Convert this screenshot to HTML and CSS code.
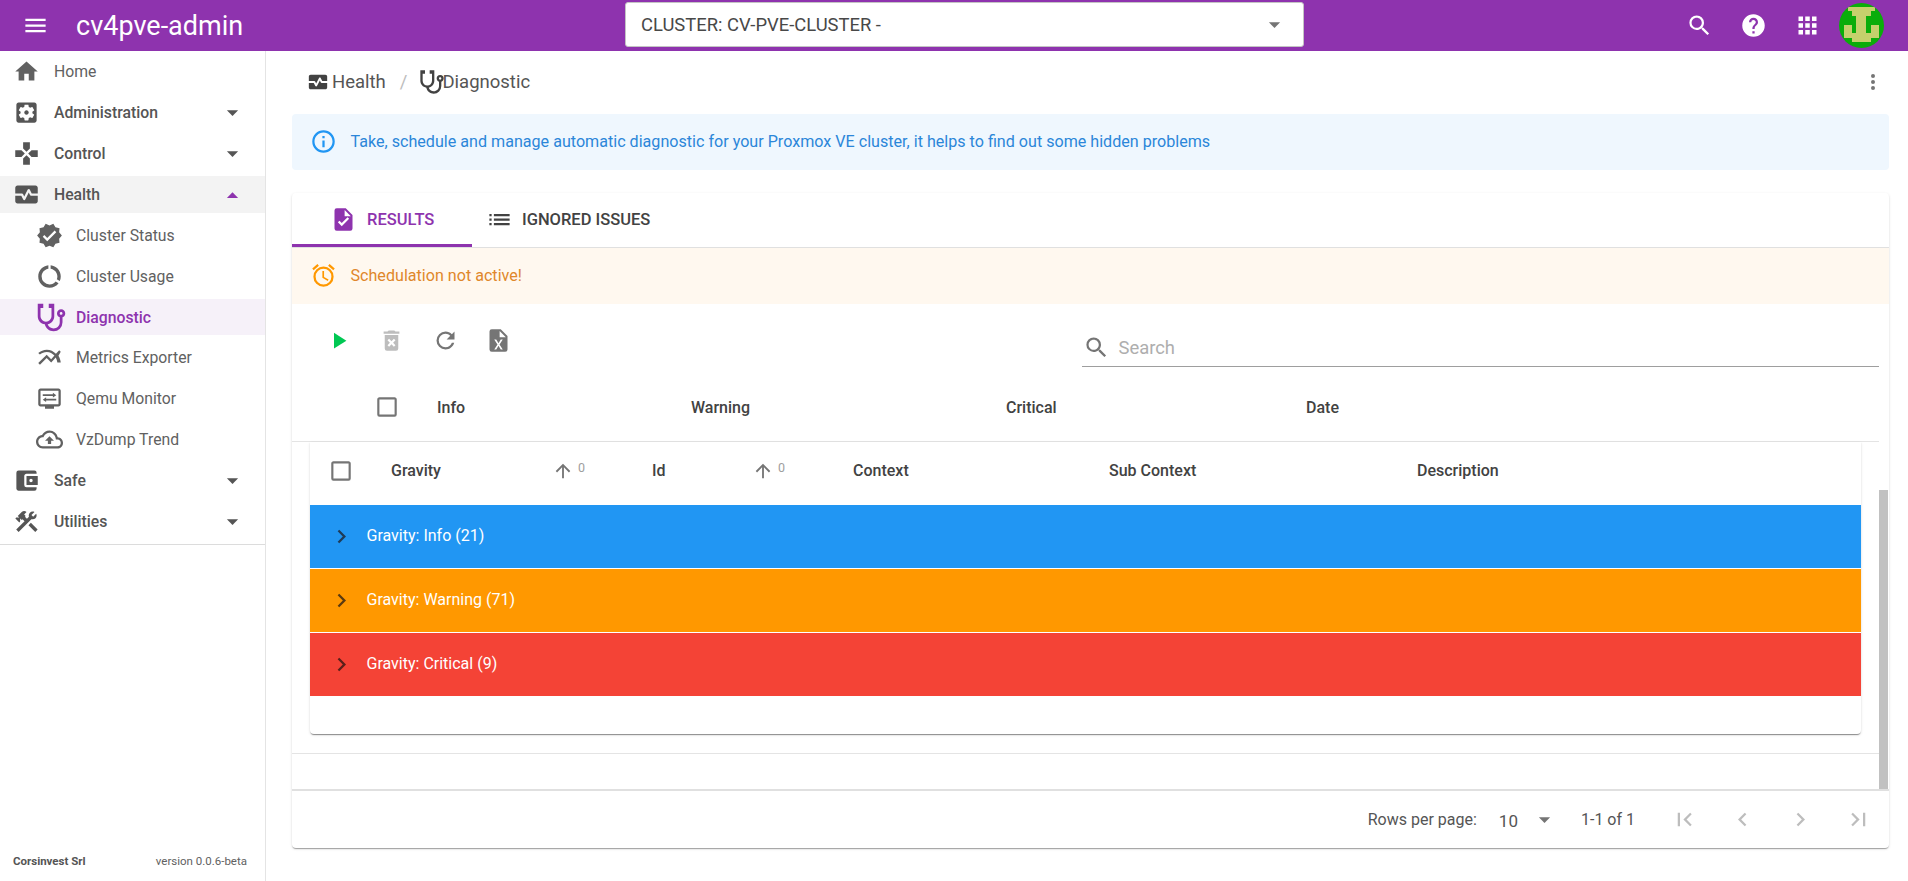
FILE: index.html
```html
<!DOCTYPE html>
<html>
  <head>
    <meta charset="UTF-8" />
    <title>cv4pve-admin</title>
    <link rel="stylesheet" href="styles.css">
  </head>
  <body>
    <svg class="sprite" xmlns="http://www.w3.org/2000/svg">
      <symbol id="i-menu" viewBox="0 0 24 24"><path d="M3,6H21V8H3V6M3,11H21V13H3V11M3,16H21V18H3V16Z"/></symbol>
      <symbol id="i-down" viewBox="0 0 24 24"><path d="M7,10L12,15L17,10H7Z"/></symbol>
      <symbol id="i-up" viewBox="0 0 24 24"><path d="M7,15L12,10L17,15H7Z"/></symbol>
      <symbol id="i-search" viewBox="0 0 24 24"><path d="M9.5,3A6.5,6.5 0 0,1 16,9.5C16,11.11 15.41,12.59 14.44,13.73L14.71,14H15.5L20.5,19L19,20.5L14,15.5V14.71L13.73,14.44C12.59,15.41 11.11,16 9.5,16A6.5,6.5 0 0,1 3,9.5A6.5,6.5 0 0,1 9.5,3M9.5,5C7,5 5,7 5,9.5C5,12 7,14 9.5,14C12,14 14,12 14,9.5C14,7 12,5 9.5,5Z"/></symbol>
      <symbol id="i-help" viewBox="0 0 24 24"><path d="M15.07,11.25L14.17,12.17C13.45,12.89 13,13.5 13,15H11V14.5C11,13.39 11.45,12.39 12.17,11.67L13.41,10.41C13.78,10.05 14,9.55 14,9C14,7.89 13.1,7 12,7A2,2 0 0,0 10,9H8A4,4 0 0,1 12,5A4,4 0 0,1 16,9C16,9.88 15.64,10.67 15.07,11.25M13,19H11V17H13M12,2A10,10 0 0,0 2,12A10,10 0 0,0 12,22A10,10 0 0,0 22,12C22,6.47 17.5,2 12,2Z"/></symbol>
      <symbol id="i-apps" viewBox="0 0 24 24"><path d="M16,20H20V16H16M16,14H20V10H16M10,8H14V4H10M16,8H20V4H16M10,14H14V10H10M4,14H8V10H4M4,20H8V16H4M10,20H14V16H10M4,8H8V4H4V8Z"/></symbol>
      <symbol id="i-home" viewBox="0 0 24 24"><path d="M10,20V14H14V20H19V12H22L12,3L2,12H5V20H10Z"/></symbol>
      <symbol id="i-admin" viewBox="0 0 24 24"><path d="M12 10c-1.1 0-2 .9-2 2s.9 2 2 2 2-.9 2-2-.9-2-2-2zm7-7H5c-1.11 0-2 .9-2 2v14c0 1.1.89 2 2 2h14c1.11 0 2-.9 2-2V5c0-1.1-.89-2-2-2zm-1.75 9c0 .23-.02.46-.05.68l1.48 1.16c.13.11.17.3.08.45l-1.4 2.42c-.09.15-.27.21-.43.15l-1.74-.7c-.36.28-.76.51-1.18.69l-.26 1.85c-.03.17-.18.3-.35.3h-2.8c-.17 0-.32-.13-.35-.29l-.26-1.85c-.43-.18-.82-.41-1.18-.69l-1.74.7c-.16.06-.34 0-.43-.15l-1.4-2.42c-.09-.15-.05-.34.08-.45l1.48-1.16c-.03-.23-.05-.46-.05-.69 0-.23.02-.46.05-.68l-1.48-1.16c-.13-.11-.17-.3-.08-.45l1.4-2.42c.09-.15.27-.21.43-.15l1.74.7c.36-.28.76-.51 1.18-.69l.26-1.85c.03-.17.18-.3.35-.3h2.8c.17 0 .32.13.35.29l.26 1.85c.43.18.82.41 1.18.69l1.74-.7c.16-.06.34 0 .43.15l1.4 2.42c.09.15.05.34-.08.45l-1.48 1.16c.03.23.05.46.05.69z"/></symbol>
      <symbol id="i-control" viewBox="0 0 24 24"><path d="M16.5,9L13.5,12L16.5,15H22V9M9,16.5V22H15V16.5L12,13.5M7.5,9H2V15H7.5L10.5,12M15,7.5V2H9V7.5L12,10.5L15,7.5Z"/></symbol>
      <symbol id="i-health" viewBox="0 0 24 24"><path d="M15.11,12.45L14,10.24l-3.11,6.21C10.73,16.79,10.38,17,10,17s-0.73-0.21-0.89-0.55L7.38,13H2v5c0,1.1,0.9,2,2,2h16c1.1,0,2-0.9,2-2v-5h-6C15.62,13,15.27,12.79,15.11,12.45z"/><path d="M20,4H4C2.9,4,2,4.9,2,6v5h6c0.38,0,0.73,0.21,0.89,0.55L10,13.76l3.11-6.21c0.34-0.68,1.45-0.68,1.79,0L16.62,11H22V6C22,4.9,21.1,4,20,4z"/></symbol>
      <symbol id="i-status" viewBox="0 0 24 24"><path d="M23,12L20.56,9.22L20.9,5.54L17.29,4.72L15.4,1.54L12,3L8.6,1.54L6.71,4.72L3.1,5.53L3.44,9.21L1,12L3.44,14.78L3.1,18.47L6.71,19.29L8.6,22.47L12,21L15.4,22.46L17.29,19.28L20.9,18.46L20.56,14.78L23,12M10,17L6,13L7.41,11.59L10,14.17L16.59,7.58L18,9L10,17Z"/></symbol>
      <symbol id="i-usage" viewBox="0 0 24 24"><path d="M13,2.05V5.08C16.39,5.57 19,8.47 19,12C19,12.9 18.82,13.75 18.5,14.54L21.12,16.07C21.68,14.83 22,13.45 22,12C22,6.82 18.05,2.55 13,2.05M12,19A7,7 0 0,1 5,12C5,8.47 7.61,5.57 11,5.08V2.05C5.94,2.55 2,6.81 2,12A10,10 0 0,0 12,22C15.3,22 18.23,20.39 20.05,17.91L17.45,16.38C16.17,18 14.21,19 12,19Z"/></symbol>
      <symbol id="i-stetho" viewBox="0 0 24 24"><path d="M19,8C19.56,8 20,8.43 20,9A1,1 0 0,1 19,10C18.43,10 18,9.55 18,9C18,8.43 18.43,8 19,8M2,2V11C2,13.96 4.19,16.5 7.14,16.91C7.76,19.92 10.42,22 13.5,22A6.5,6.5 0 0,0 20,15.5V11.81C21.16,11.39 22,10.29 22,9A3,3 0 0,0 19,6A3,3 0 0,0 16,9C16,10.29 16.84,11.4 18,11.81V15.41C18,17.91 16,19.91 13.5,19.91C11.5,19.91 9.82,18.7 9.22,16.9C12,16.3 14,13.8 14,11V2H10V5H12V11A4,4 0 0,1 8,15A4,4 0 0,1 4,11V5H6V2H2Z"/></symbol>
      <symbol id="i-metrics" viewBox="0 0 24 24"><path d="M22 6.92l-1.41-1.41-2.85 3.21C15.68 6.4 12.83 5 9.61 5 6.72 5 4.07 6.16 2 8l1.42 1.42C5.12 7.93 7.27 7 9.61 7c2.74 0 5.09 1.26 6.77 3.24l-2.88 3.24-4-4L2 16.99l1.5 1.5 6-6.01 4 4 4.05-4.55c.75 1.35 1.25 2.9 1.44 4.55H22c-.22-2.3-.95-4.39-2.04-6.14L22 6.92z"/></symbol>
      <symbol id="i-qemu" viewBox="0 0 24 24"><path d="M20 3H4c-1.1 0-2 .9-2 2v12c0 1.1.9 2 2 2h4v2h8v-2h4c1.1 0 2-.9 2-2V5c0-1.1-.9-2-2-2zm0 14H4V5h16v12z"/><path d="M6 8.3h9V6.8L18 9l-3 2.2V9.7H6zM18 12.3H9v-1.5L6 13l3 2.2v-1.5h9z"/></symbol>
      <symbol id="i-cloud" viewBox="0 0 24 24"><path d="M19.35 10.04C18.67 6.59 15.64 4 12 4 9.11 4 6.6 5.64 5.35 8.04 2.34 8.36 0 10.91 0 14c0 3.31 2.69 6 6 6h13c2.76 0 5-2.24 5-5 0-2.64-2.05-4.78-4.65-4.96zM19 18H6c-2.21 0-4-1.79-4-4 0-2.05 1.53-3.76 3.56-3.97l1.07-.11.5-.95C8.08 7.14 9.94 6 12 6c2.62 0 4.88 1.86 5.39 4.43l.3 1.5 1.53.11c1.56.1 2.78 1.41 2.78 2.96 0 1.65-1.35 3-3 3zM8 13h2.55v3h2.9v-3H16l-4-4z"/></symbol>
      <symbol id="i-safe" viewBox="0 0 24 24"><path d="M21,18V19A2,2 0 0,1 19,21H5C3.89,21 3,20.1 3,19V5A2,2 0 0,1 5,3H19A2,2 0 0,1 21,5V6H12C10.89,6 10,6.9 10,8V16A2,2 0 0,0 12,18M12,16H22V8H12M16,13.5A1.5,1.5 0 0,1 14.5,12A1.5,1.5 0 0,1 16,10.5A1.5,1.5 0 0,1 17.5,12A1.5,1.5 0 0,1 16,13.5Z"/></symbol>
      <symbol id="i-tools" viewBox="0 0 24 24"><path d="M13.78 15.3L19.78 21.3L21.89 19.14L15.89 13.14L13.78 15.3M17.5 10.1C17.11 10.1 16.69 10.05 16.36 9.91L4.97 21.25L2.86 19.14L10.27 11.74L8.5 9.96L7.78 10.66L6.33 9.25V12.11L5.63 12.81L2.11 9.25L2.81 8.55H5.62L4.22 7.14L7.78 3.58C8.95 2.41 10.83 2.41 12 3.58L9.89 5.74L11.3 7.14L10.59 7.85L12.38 9.63L14.2 7.75C14.06 7.42 14 7 14 6.63C14 4.66 15.56 3.11 17.5 3.11C18.09 3.11 18.61 3.25 19.08 3.53L16.41 6.2L17.91 7.7L20.58 5.03C20.86 5.5 21 6 21 6.63C21 8.55 19.45 10.1 17.5 10.1Z"/></symbol>
      <symbol id="i-dots" viewBox="0 0 24 24"><path d="M12,16A2,2 0 0,1 14,18A2,2 0 0,1 12,20A2,2 0 0,1 10,18A2,2 0 0,1 12,16M12,10A2,2 0 0,1 14,12A2,2 0 0,1 12,14A2,2 0 0,1 10,12A2,2 0 0,1 12,10M12,4A2,2 0 0,1 14,6A2,2 0 0,1 12,8A2,2 0 0,1 10,6A2,2 0 0,1 12,4Z"/></symbol>
      <symbol id="i-info" viewBox="0 0 24 24"><path d="M11,9H13V7H11M12,20C7.59,20 4,16.41 4,12C4,7.59 7.59,4 12,4C16.41,4 20,7.59 20,12C20,16.41 16.41,20 12,20M12,2A10,10 0 0,0 2,12A10,10 0 0,0 12,22A10,10 0 0,0 22,12A10,10 0 0,0 12,2M11,17H13V11H11V17Z"/></symbol>
      <symbol id="i-filecheck" viewBox="0 0 24 24"><path d="M14,2H6A2,2 0 0,0 4,4V20A2,2 0 0,0 6,22H18A2,2 0 0,0 20,20V8L14,2M10.45,18L7,14.55L8.41,13.14L10.45,15.17L15.59,10L17,11.42L10.45,18M13,9V3.5L18.5,9H13Z"/></symbol>
      <symbol id="i-list" viewBox="0 0 24 24"><path d="M3 13h2v-2H3v2zm0 4h2v-2H3v2zm0-8h2V7H3v2zm4 4h14v-2H7v2zm0 4h14v-2H7v2zM7 7v2h14V7H7z"/></symbol>
      <symbol id="i-alarm" viewBox="0 0 24 24"><path d="M12,20A7,7 0 0,1 5,13A7,7 0 0,1 12,6A7,7 0 0,1 19,13A7,7 0 0,1 12,20M12,4A9,9 0 0,0 3,13A9,9 0 0,0 12,22A9,9 0 0,0 21,13A9,9 0 0,0 12,4M12.5,8H11V14L15.75,16.85L16.5,15.62L12.5,13.25V8M7.88,3.39L6.6,1.86L2,5.71L3.29,7.24L7.88,3.39M22,5.72L17.4,1.86L16.11,3.39L20.71,7.25L22,5.72Z"/></symbol>
      <symbol id="i-play" viewBox="0 0 24 24"><path d="M8,5.14V19.14L19,12.14L8,5.14Z"/></symbol>
      <symbol id="i-trash" viewBox="0 0 24 24"><path d="M6,19A2,2 0 0,0 8,21H16A2,2 0 0,0 18,19V7H6V19M8.46,11.88L9.87,10.47L12,12.59L14.12,10.47L15.53,11.88L13.41,14L15.53,16.12L14.12,17.53L12,15.41L9.88,17.53L8.47,16.12L10.59,14L8.46,11.88M15.5,4L14.5,3H9.5L8.5,4H5V6H19V4H15.5Z"/></symbol>
      <symbol id="i-refresh" viewBox="0 0 24 24"><path d="M17.65,6.35C16.2,4.9 14.21,4 12,4A8,8 0 0,0 4,12A8,8 0 0,0 12,20C15.73,20 18.84,17.45 19.73,14H17.65C16.83,16.33 14.61,18 12,18A6,6 0 0,1 6,12A6,6 0 0,1 12,6C13.66,6 15.14,6.69 16.22,7.78L13,11H20V4L17.65,6.35Z"/></symbol>
      <symbol id="i-excel" viewBox="0 0 24 24"><path d="M14,2H6A2,2 0 0,0 4,4V20A2,2 0 0,0 6,22H18A2,2 0 0,0 20,20V8L14,2M15.8,20H14L12,16.6L10,20H8.2L11.1,15.5L8.2,11H10L12,14.4L14,11H15.8L12.9,15.5L15.8,20M13,9V3.5L18.5,9H13Z"/></symbol>
      <symbol id="i-check" viewBox="0 0 24 24"><path d="M19,3H5C3.89,3 3,3.89 3,5V19A2,2 0 0,0 5,21H19A2,2 0 0,0 21,19V5C21,3.89 20.1,3 19,3M19,5V19H5V5H19Z"/></symbol>
      <symbol id="i-arrowup" viewBox="0 0 24 24"><path d="M13,20H11V8L5.5,13.5L4.08,12.08L12,4.16L19.92,12.08L18.5,13.5L13,8V20Z"/></symbol>
      <symbol id="i-right" viewBox="0 0 24 24"><path d="M8.59,16.58L13.17,12L8.59,7.41L10,6L16,12L10,18L8.59,16.58Z"/></symbol>
      <symbol id="i-left" viewBox="0 0 24 24"><path d="M15.41,16.58L10.83,12L15.41,7.41L14,6L8,12L14,18L15.41,16.58Z"/></symbol>
      <symbol id="i-first" viewBox="0 0 24 24"><path d="M18.41,16.59L13.82,12L18.41,7.41L17,6L11,12L17,18L18.41,16.59M6,6H8V18H6V6Z"/></symbol>
      <symbol id="i-last" viewBox="0 0 24 24"><path d="M5.59,7.41L10.18,12L5.59,16.59L7,18L13,12L7,6L5.59,7.41M16,6H18V18H16V6Z"/></symbol>
    </svg>

    <header class="topbar">
      <div class="brand">
        <svg class="icon burger"><use href="#i-menu"/></svg>
        <span class="brand-name">cv4pve-admin</span>
      </div>
      <div class="cluster">
        <span>CLUSTER: CV-PVE-CLUSTER -</span>
        <svg class="icon"><use href="#i-down"/></svg>
      </div>
      <div class="top-actions">
        <svg class="icon"><use href="#i-search"/></svg>
        <svg class="icon"><use href="#i-help"/></svg>
        <svg class="icon"><use href="#i-apps"/></svg>
        <svg class="avatar" viewBox="0 0 45 45">
          <rect width="45" height="45" fill="#0aad0a"/>
          <path fill="#c5d06c" d="M9 4H36V8H32V13H27V30H32V22H40V35H32V39H13V35H5V22H13V30H17V13H13V8H9Z"/>
        </svg>
      </div>
    </header>

    <div class="layout">
      <nav class="sidebar">
        <ul class="nav">
          <li class="nav-item"><svg class="icon"><use href="#i-home"/></svg><span>Home</span></li>
          <li class="nav-item group"><svg class="icon"><use href="#i-admin"/></svg><span>Administration</span><svg class="icon caret"><use href="#i-down"/></svg></li>
          <li class="nav-item group"><svg class="icon"><use href="#i-control"/></svg><span>Control</span><svg class="icon caret"><use href="#i-down"/></svg></li>
          <li class="nav-item group open"><svg class="icon"><use href="#i-health"/></svg><span>Health</span><svg class="icon caret"><use href="#i-up"/></svg></li>
          <li class="nav-item sub"><svg class="icon"><use href="#i-status"/></svg><span>Cluster Status</span></li>
          <li class="nav-item sub"><svg class="icon"><use href="#i-usage"/></svg><span>Cluster Usage</span></li>
          <li class="nav-item sub active"><svg class="icon"><use href="#i-stetho"/></svg><span>Diagnostic</span></li>
          <li class="nav-item sub"><svg class="icon"><use href="#i-metrics"/></svg><span>Metrics Exporter</span></li>
          <li class="nav-item sub"><svg class="icon"><use href="#i-qemu"/></svg><span>Qemu Monitor</span></li>
          <li class="nav-item sub"><svg class="icon"><use href="#i-cloud"/></svg><span>VzDump Trend</span></li>
          <li class="nav-item group"><svg class="icon"><use href="#i-safe"/></svg><span>Safe</span><svg class="icon caret"><use href="#i-down"/></svg></li>
          <li class="nav-item group"><svg class="icon"><use href="#i-tools"/></svg><span>Utilities</span><svg class="icon caret"><use href="#i-down"/></svg></li>
        </ul>
        <div class="side-foot">
          <strong>Corsinvest Srl</strong>
          <span>version 0.0.6-beta</span>
        </div>
      </nav>

      <main class="content">
        <div class="crumbs">
          <svg class="icon crumb-health"><use href="#i-health"/></svg>
          <span>Health</span>
          <span class="crumb-sep">/</span>
          <svg class="icon crumb-stetho"><use href="#i-stetho"/></svg>
          <span>Diagnostic</span>
          <svg class="icon crumb-more"><use href="#i-dots"/></svg>
        </div>

        <div class="alert alert-info">
          <svg class="icon"><use href="#i-info"/></svg>
          <span>Take, schedule and manage automatic diagnostic for your Proxmox VE cluster, it helps to find out some hidden problems</span>
        </div>

        <section class="card">
          <div class="tabs">
            <div class="tab tab-active"><svg class="icon"><use href="#i-filecheck"/></svg><span>RESULTS</span></div>
            <div class="tab"><svg class="icon"><use href="#i-list"/></svg><span>IGNORED ISSUES</span></div>
          </div>
          <div class="alert alert-warn">
            <svg class="icon"><use href="#i-alarm"/></svg>
            <span>Schedulation not active!</span>
          </div>

          <div class="card-body">
            <div class="toolbar">
              <div class="tools">
                <svg class="icon play"><use href="#i-play"/></svg>
                <svg class="icon muted"><use href="#i-trash"/></svg>
                <svg class="icon"><use href="#i-refresh"/></svg>
                <svg class="icon"><use href="#i-excel"/></svg>
              </div>
              <div class="search">
                <svg class="icon"><use href="#i-search"/></svg>
                <span>Search</span>
              </div>
            </div>

            <div class="outer-head">
              <svg class="icon box"><use href="#i-check"/></svg>
              <span>Info</span>
              <span>Warning</span>
              <span>Critical</span>
              <span>Date</span>
            </div>

            <div class="outer-row">
              <div class="panel">
                <div class="panel-head">
                  <svg class="icon box"><use href="#i-check"/></svg>
                  <div class="th"><span>Gravity</span><svg class="icon sort"><use href="#i-arrowup"/></svg><small>0</small></div>
                  <div class="th th-id"><span>Id</span><svg class="icon sort"><use href="#i-arrowup"/></svg><small>0</small></div>
                  <span>Context</span>
                  <span>Sub Context</span>
                  <span>Description</span>
                </div>
                <div class="group-row row-info"><svg class="icon"><use href="#i-right"/></svg><span>Gravity: Info (21)</span></div>
                <div class="group-row row-warning"><svg class="icon"><use href="#i-right"/></svg><span>Gravity: Warning (71)</span></div>
                <div class="group-row row-critical"><svg class="icon"><use href="#i-right"/></svg><span>Gravity: Critical (9)</span></div>
                <div class="panel-end"></div>
              </div>
            </div>
            <div class="outer-gap"></div>
            <div class="thumb"></div>
          </div>

          <div class="pager">
            <span>Rows per page:</span>
            <span class="pager-size">10</span>
            <svg class="icon pager-caret"><use href="#i-down"/></svg>
            <span class="pager-range">1-1 of 1</span>
            <svg class="icon"><use href="#i-first"/></svg>
            <svg class="icon"><use href="#i-left"/></svg>
            <svg class="icon"><use href="#i-right"/></svg>
            <svg class="icon"><use href="#i-last"/></svg>
          </div>
        </section>
      </main>
    </div>
  </body>
</html>
```

FILE: styles.css
```css
* {
  box-sizing: border-box;
}
html,
body {
  height: 100%;
}
body {
  margin: 0;
  overflow: hidden;
  background: white;
  color: #424242;
  font-family: Roboto, sans-serif;
  font-size: 16px;
  display: flex;
  flex-direction: column;
}
.sprite {
  display: none;
}
.icon {
  width: 27px;
  height: 27px;
  flex: none;
  fill: currentColor;
}

/* top bar */
.topbar {
  height: 51px;
  flex: none;
  background: #8e33ae;
  color: white;
  display: grid;
  grid-template-columns: 625px 679px 1fr;
}
.brand {
  display: flex;
  align-items: center;
  padding-left: 21.5px;
}
.burger {
  margin-right: 27.5px;
}
.brand-name {
  font-size: 27px;
}
.cluster {
  margin: 2px 0 4px;
  background: white;
  border: 1px solid #c4c4c4;
  border-radius: 3px;
  color: #484848;
  font-size: 18.4px;
  display: flex;
  align-items: center;
  justify-content: space-between;
  padding: 0 15.5px 0 15px;
}
.cluster .icon {
  color: #757575;
}
.top-actions {
  display: flex;
  align-items: center;
  padding-left: 381.5px;
  gap: 27px;
}
.avatar {
  width: 45px;
  height: 45px;
  border-radius: 50%;
  margin-left: -8.5px;
}

/* sidebar */
.layout {
  flex: 1;
  display: flex;
  min-height: 0;
}
.sidebar {
  width: 266px;
  flex: none;
  border-right: 1px solid #e4e4e4;
  display: flex;
  flex-direction: column;
}
.nav {
  list-style: none;
  margin: 0;
  padding: 2px 0 4px;
  border-bottom: 1px solid #dcdcdc;
  display: flex;
  flex-direction: column;
  gap: 4.2px;
  height: 494px;
  color: #616161;
  font-size: 15.75px;
}
.nav-item {
  height: 37px;
  display: flex;
  align-items: center;
  padding-left: 13px;
}
.nav-item > .icon:first-child {
  margin-right: 14px;
}
.nav-item.group {
  font-weight: 500;
  color: #555;
}
.nav-item.open {
  background: #f3f3f3;
}
.nav-item.sub {
  padding-left: 36px;
}
.nav-item.sub > .icon:first-child {
  margin-right: 13px;
}
.nav-item.active {
  background: #f6f1f9;
  color: #8e33ae;
  font-weight: 500;
  padding-left: 34.5px;
}
.nav-item.active > .icon:first-child {
  width: 33px;
  height: 33px;
  margin-right: 8.5px;
}
.caret {
  margin-left: auto;
  margin-right: 19px;
}
.open .caret {
  color: #8e33ae;
}
.side-foot {
  margin-top: auto;
  display: flex;
  justify-content: space-between;
  padding: 0 18px 13px 13px;
  font-size: 11.5px;
  color: #616161;
}
.side-foot strong {
  font-weight: 700;
  color: #555;
}

/* main column */
.content {
  flex: 1;
  min-width: 0;
  padding: 0 19px 0 26px;
  display: flex;
  flex-direction: column;
}
.crumbs {
  height: 63px;
  display: flex;
  align-items: center;
  font-size: 18.5px;
  color: #555;
  padding-bottom: 1px;
}
.crumb-health {
  width: 22px;
  height: 22px;
  margin: 0 3px 0 15px;
  color: #424242;
}
.crumb-sep {
  margin: 0 11px 0 14px;
  color: #bdbdbd;
}
.crumb-stetho {
  width: 28px;
  height: 28px;
  margin-right: -4px;
  color: #424242;
}
.crumb-more {
  margin-left: auto;
  margin-right: 4px;
  width: 24px;
  height: 24px;
  color: #757575;
}

.alert {
  display: flex;
  align-items: center;
  height: 56px;
  padding: 0 0 1px 17.5px;
  flex: none;
  font-size: 16.12px;
}
.alert .icon {
  margin-right: 14px;
}
.alert-info {
  background: #eff7fe;
  border-radius: 4px;
  color: #2b86d9;
  margin-bottom: 23px;
}
.alert-info .icon {
  color: #2196f3;
}
.alert-warn {
  background: #fff8ef;
  color: #e0872a;
}
.alert-warn .icon {
  color: #ff9800;
}

/* card */
.card {
  height: 655px;
  border-radius: 4px;
  box-shadow: 0 2px 1px -1px rgba(0, 0, 0, 0.2), 0 1px 1px 0 rgba(0, 0, 0, 0.14), 0 1px 3px 0 rgba(0, 0, 0, 0.12);
  display: flex;
  flex-direction: column;
}
.tabs {
  display: flex;
  height: 55px;
  flex: none;
  border-bottom: 1px solid #e0e0e0;
  font-size: 16.5px;
}
.tab {
  display: flex;
  align-items: center;
  font-weight: 500;
  padding: 0 0 2px 37.5px;
  width: 180px;
  gap: 10.5px;
}
.tab:last-child {
  width: auto;
  padding-left: 14px;
  gap: 9px;
}
.tab-active {
  color: #8e33ae;
  border-bottom: 3px solid #8e33ae;
  padding-top: 1px;
  padding-bottom: 0;
}

.card-body {
  flex: 1;
  position: relative;
  display: flex;
  flex-direction: column;
  min-height: 0;
}
.toolbar {
  height: 76px;
  flex: none;
  display: flex;
  justify-content: space-between;
  align-items: flex-start;
}
.tools {
  display: flex;
  align-items: center;
  gap: 26.6px;
  height: 72px;
  padding-left: 32.5px;
  color: #757575;
}
.tools .play {
  color: #00c853;
}
.tools .muted {
  color: #bdbdbd;
}
.search {
  width: 797px;
  height: 63px;
  margin-right: 10px;
  display: flex;
  align-items: center;
  gap: 9px;
  padding: 25px 0 0 0.5px;
  border-bottom: 1px solid #9e9e9e;
  color: #aeaeae;
  font-size: 18.4px;
}
.search .icon {
  color: #757575;
}
.outer-head {
  height: 61px;
  flex: none;
  display: grid;
  grid-template-columns: 61px 254px 315px 300px 1fr;
  align-items: center;
  padding: 0 0 7px 84px;
  font-weight: 500;
}
.box {
  width: 26px;
  height: 26px;
  margin-left: -2px;
  color: #757575;
}
.outer-row {
  margin-right: 10px;
  border-top: 1px solid #e4e4e4;
  padding: 0 18px 19px 18px;
  border-bottom: 1px solid #e4e4e4;
  flex: none;
}
.panel {
  border-radius: 0 0 4px 4px;
  box-shadow: 0 2px 1px -1px rgba(0, 0, 0, 0.3), 0 1px 1px 0 rgba(0, 0, 0, 0.14), 0 1px 3px 0 rgba(0, 0, 0, 0.12);
  background: white;
}
.panel-head {
  height: 63px;
  display: grid;
  grid-template-columns: 61px 261px 201px 256px 308px 1fr;
  align-items: center;
  padding: 0 0 6px 20px;
  font-weight: 500;
}
.th {
  display: flex;
  align-items: center;
}
.th > span {
  width: 161px;
}
.th-id > span {
  width: 100px;
}
.sort {
  width: 22px;
  height: 22px;
  color: #757575;
}
.th small {
  font-size: 12.5px;
  font-weight: 400;
  color: #9e9e9e;
  margin: -6px 0 0 4px;
}
.group-row {
  height: 63px;
  margin-bottom: 1px;
  display: flex;
  align-items: center;
  color: white;
  padding-left: 17.5px;
  gap: 12px;
}
.group-row span {
  padding-bottom: 2px;
}
.group-row .icon {
  color: #1f3b57;
}
.row-info {
  background: #2196f3;
}
.row-warning {
  background: #ff9800;
}
.row-warning .icon {
  color: #5a3a10;
}
.row-critical {
  background: #f44336;
}
.row-critical .icon {
  color: #5a1f1a;
}
.panel-end {
  height: 37px;
}
.outer-gap {
  flex: 1;
}
.thumb {
  position: absolute;
  right: 1px;
  bottom: 0;
  width: 9px;
  height: 299px;
  background: #c1c1c1;
}

/* pager */
.pager {
  height: 59px;
  flex: none;
  border-top: 2px solid #e0e0e0;
  display: flex;
  align-items: center;
  justify-content: flex-end;
  padding-right: 17.5px;
  gap: 31px;
  color: #555;
}
.pager .icon {
  color: #bdbdbd;
}
.pager-size {
  margin-left: -9px;
  font-size: 17px;
  padding-top: 2px;
}
.pager .pager-caret {
  margin-left: -17.5px;
  color: #757575;
}
.pager-range {
  margin: 0 4.5px 0 -8.5px;
}
```
